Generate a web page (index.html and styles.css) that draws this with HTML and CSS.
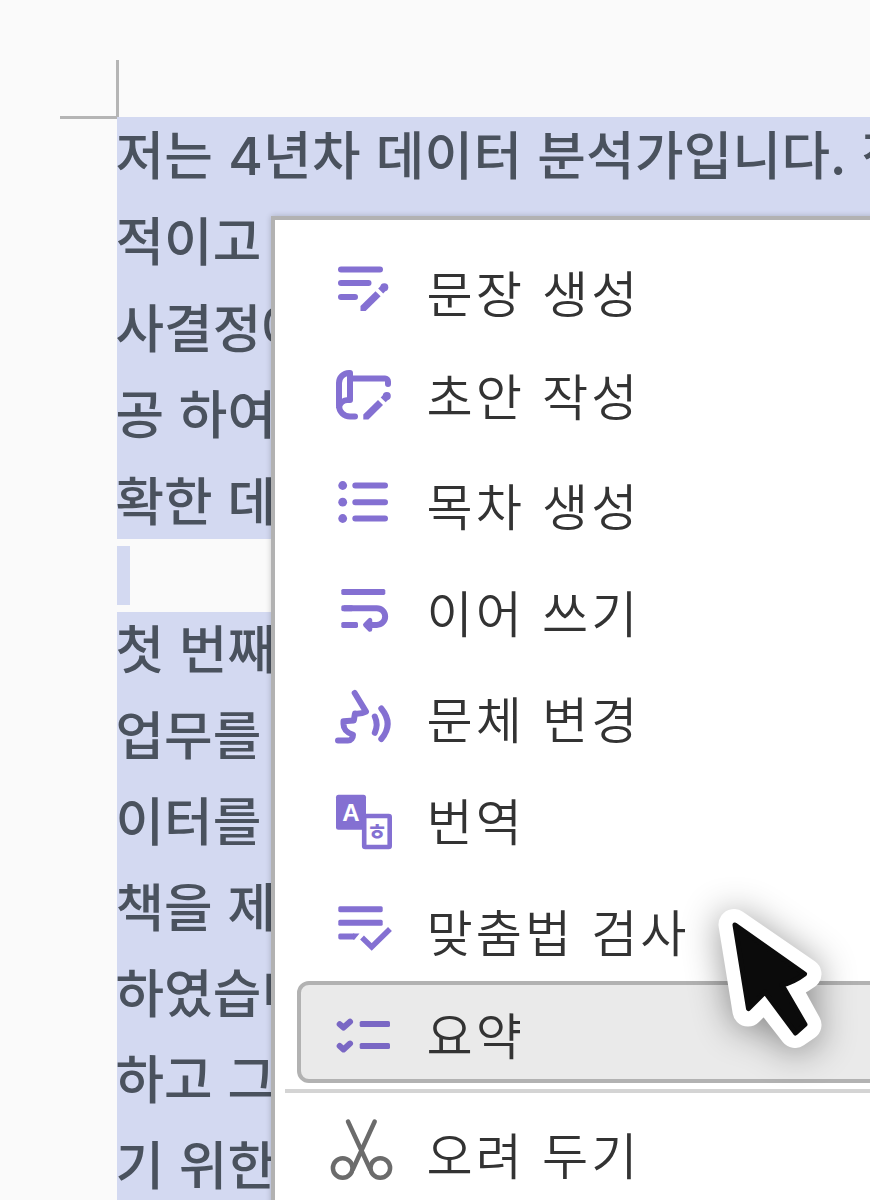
FILE: index.html
```html
<!DOCTYPE html>
<html lang="ko">
  <head>
    <meta charset="UTF-8" />
    <meta name="viewport" content="width=device-width, initial-scale=1.0" />
    <title>문서 편집</title>
    <link rel="stylesheet" href="styles.css">
  </head>
  <body>
    <div class="page">
      <div class="page-corner"></div>
      <div class="document">
        <div class="selection first">
          <p class="lead">저는 <span class="digit">4</span>년차 데이터 분석가입니다. 정</p>
          <p>적이고</p>
          <p>사결정에</p>
          <p>공 하여</p>
          <p>확한 데</p>
        </div>
        <div class="empty-line"></div>
        <div class="selection">
          <p>첫 번째</p>
          <p>업무를</p>
          <p>이터를</p>
          <p>책을 제</p>
          <p>하였습니</p>
          <p>하고 그</p>
          <p>기 위한</p>
        </div>
      </div>

      <div class="menu">
        <div class="item">
          <svg class="icon" viewBox="0 0 64 64">
            <path d="M9 12.4H48M9 26H36.5M9 40H23" />
            <path class="fill" d="M28.5 54V49L43.5 34.2L48.6 39.2L33.6 54Z" />
            <circle class="fill" cx="52.3" cy="30.3" r="4" />
            <path class="fill" d="M46.2 31.6L50 27.8L55 32.6L51.2 36.4Z" />
          </svg>
          <span class="label">문장 생성</span>
        </div>
        <div class="item">
          <svg class="icon" viewBox="0 0 64 64">
            <path d="M23 53.5H18A11 11 0 0 1 7 42.5V20A10 10 0 0 1 17 10H18V37H16A9 9 0 0 0 7 44M18 15.4H53A3 3 0 0 1 56 18.4V21" />
            <path class="fill" d="M31.3 56.5V51.5L46 37L51 42L36.4 56.5Z" />
            <circle class="fill" cx="54.8" cy="33" r="4" />
            <path class="fill" d="M48.7 34.4L52.5 30.6L57.5 35.4L53.7 39.2Z" />
          </svg>
          <span class="label up">초안 작성</span>
        </div>
        <div class="item">
          <svg class="icon" viewBox="0 0 64 64">
            <circle class="fill" cx="10.7" cy="15.5" r="4.4" />
            <circle class="fill" cx="10.7" cy="32.2" r="4.4" />
            <circle class="fill" cx="10.7" cy="48.5" r="4.4" />
            <path d="M23.3 15.5H53M23.3 32.2H53M23.3 48.5H53" />
          </svg>
          <span class="label">목차 생성</span>
        </div>
        <div class="item">
          <svg class="icon" viewBox="0 0 64 64">
            <rect class="fill" x="9.3" y="12.9" width="44" height="6" rx="1.6" />
            <rect class="fill" x="9.3" y="29.2" width="12" height="6" rx="1.6" />
            <rect class="fill" x="9.3" y="45.9" width="16.7" height="6" rx="1.6" />
            <path class="butt" d="M12 32.2H44.8A8.3 8.3 0 0 1 44.8 48.9H37" />
            <path class="fill round" d="M33.3 48.9L38 44.2V53.6Z" />
          </svg>
          <span class="label">이어 쓰기</span>
        </div>
        <div class="item">
          <svg class="icon" viewBox="0 0 64 64">
            <path d="M22.7 10L34 28.6Q30 31 23 30.6L21.8 37.6L11.5 38.3V41C11.5 47 15 49.5 21 51.8C21 55 19 57.6 16 57.6H6" />
            <path d="M42.8 33.5Q46.5 41.5 42.8 49.8M49.3 25.5Q62 41 49.3 56" />
          </svg>
          <span class="label">문체 변경</span>
        </div>
        <div class="item">
          <svg class="icon" viewBox="0 0 64 64">
            <rect class="fill" x="4" y="5.7" width="30" height="35" rx="2.5" />
            <rect class="sheet" x="32.2" y="27" width="25.5" height="31" rx="1" />
            <text class="latin" x="19" y="32">A</text>
            <text class="hangul" x="45" y="50.5">ㅎ</text>
          </svg>
          <span class="label up">번역</span>
        </div>
        <div class="item">
          <svg class="icon" viewBox="0 0 64 64">
            <rect class="fill" x="6.3" y="11.2" width="44.4" height="6" rx="1.6" />
            <rect class="fill" x="6.3" y="24.8" width="44.4" height="6" rx="1.6" />
            <rect class="fill" x="6.3" y="38.4" width="17" height="6" rx="1.6" />
            <path class="fill" d="M21 38.4H27.5L22.5 44.4H21Z" />
            <path class="check" d="M32 44.5L39.7 52L56 36" />
          </svg>
          <span class="label">맞춤법 검사</span>
        </div>
        <div class="item selected">
          <svg class="icon" viewBox="0 0 64 64">
            <rect class="fill" x="27.7" y="21" width="30.3" height="6" rx="1.6" />
            <rect class="fill" x="27.7" y="43" width="30.3" height="6" rx="1.6" />
            <path d="M7.7 24.2L11.5 27.6L18 21.8M7.7 46L11.5 49.4L18 43.6" />
          </svg>
          <span class="label">요약</span>
        </div>
        <div class="divider"></div>
        <div class="item">
          <svg class="icon scissors" viewBox="0 0 64 64">
            <circle cx="10.7" cy="49" r="9.8" />
            <circle cx="48.3" cy="49" r="9.8" />
            <path d="M16 2.5L38 50M42.7 2.5L21 50" />
          </svg>
          <span class="label">오려 두기</span>
        </div>
      </div>

      <svg class="cursor" viewBox="0 0 120 150">
        <path class="outline" d="M16 16.5L88 66Q77 74 66 77L88 117L77 124.5L47 86L30 103Z" />
        <path class="arrow" d="M17 17L86.5 66Q76 74 64 77L87 116.5L77.5 125L47 84L30.5 100.5Z" />
      </svg>
    </div>
  </body>
</html>
```
FILE: styles.css
```css
body {
  margin: 0;
  background-color: #fafafa;
  font-family: "Noto Sans CJK KR", sans-serif;
}
.page {
  position: relative;
  box-sizing: border-box;
  width: 870px;
  height: 1200px;
  padding-top: 60px;
  overflow: hidden;
}
.page-corner {
  box-sizing: border-box;
  width: 58.5px;
  height: 58.5px;
  margin-left: 60px;
  border-right: 3px solid #b5b5b5;
  border-bottom: 3px solid #b5b5b5;
}
.document {
  margin: -1.5px 0 0 117px;
}
.selection {
  overflow: hidden;
  height: 600px;
  background-color: #d3d9f1;
}
.selection.first {
  height: 422px;
}
.selection p {
  margin: 0 0 0 -1.5px;
  height: 86px;
  line-height: 69px;
  font-size: 52.8px;
  font-weight: 500;
  color: #4a525e;
  white-space: nowrap;
}
.selection.first p {
  height: 86.4px;
  line-height: 71px;
}
.selection .lead {
  letter-spacing: 0.25px;
}
.digit {
  font-family: Inter, sans-serif;
}
.empty-line {
  width: 13px;
  height: 59px;
  margin: 7px 0;
  background-color: #d3d9f1;
}
/* context menu over the document */
.menu {
  position: absolute;
  left: 271px;
  top: 216px;
  box-sizing: border-box;
  width: 700px;
  height: 1100px;
  padding-top: 15.8px;
  border: 4px solid #b2b2b2;
  background-color: #fff;
  box-shadow: 0 0 6px rgba(0, 0, 0, 0.2);
}
.item {
  display: flex;
  align-items: center;
  gap: 30.6px;
  height: 106.4px;
  padding-left: 57px;
}
.selected {
  box-sizing: border-box;
  height: 102px;
  margin-left: 22px;
  padding-left: 31px;
  border: 4px solid #b2b2b2;
  border-radius: 12px;
  background-color: #eaeaea;
}
.divider {
  height: 4px;
  margin: 6px 0 5px 10px;
  background-color: #d4d4d4;
}
.label {
  padding-top: 5px;
  font-size: 50.2px;
  font-weight: 350;
  line-height: 60px;
  letter-spacing: 3px;
  color: #333;
  white-space: nowrap;
}
.label.up {
  padding: 0 0 3px;
}
.selected .label {
  padding-top: 2px;
}
.icon {
  flex: none;
  width: 64px;
  height: 64px;
  overflow: visible;
  fill: none;
  stroke: #8470d2;
  stroke-width: 6;
  stroke-linecap: round;
  stroke-linejoin: round;
}
.icon .butt {
  stroke-linecap: butt;
}
.icon .check {
  stroke-linecap: square;
  stroke-linejoin: miter;
  stroke-width: 5.5;
}
.icon .fill {
  fill: #8470d2;
  stroke: none;
}
.icon .round {
  stroke: #8470d2;
  stroke-width: 4.5;
}
.icon .sheet {
  fill: #fff;
  stroke-width: 4.6;
}
.icon text {
  stroke: none;
  text-anchor: middle;
  font-weight: 700;
}
.icon .latin {
  fill: #fff;
  font-family: "Liberation Sans", sans-serif;
  font-size: 24px;
}
.icon .hangul {
  fill: #8470d2;
  font-size: 23px;
}
.selected .icon {
  stroke: #7a67c4;
}
.selected .icon .fill {
  fill: #7a67c4;
}
.icon.scissors {
  stroke: #6b6b6b;
  stroke-width: 4.5;
}
.cursor {
  position: absolute;
  left: 718px;
  top: 908px;
  width: 120px;
  height: 150px;
  overflow: visible;
  stroke-linejoin: round;
  filter: drop-shadow(0 4px 18px rgba(0, 0, 0, 0.42));
}
.outline {
  fill: #fff;
  stroke: #fff;
  stroke-width: 31;
}
.arrow {
  fill: #0b0b0b;
  stroke: #0b0b0b;
  stroke-width: 5;
}
```
